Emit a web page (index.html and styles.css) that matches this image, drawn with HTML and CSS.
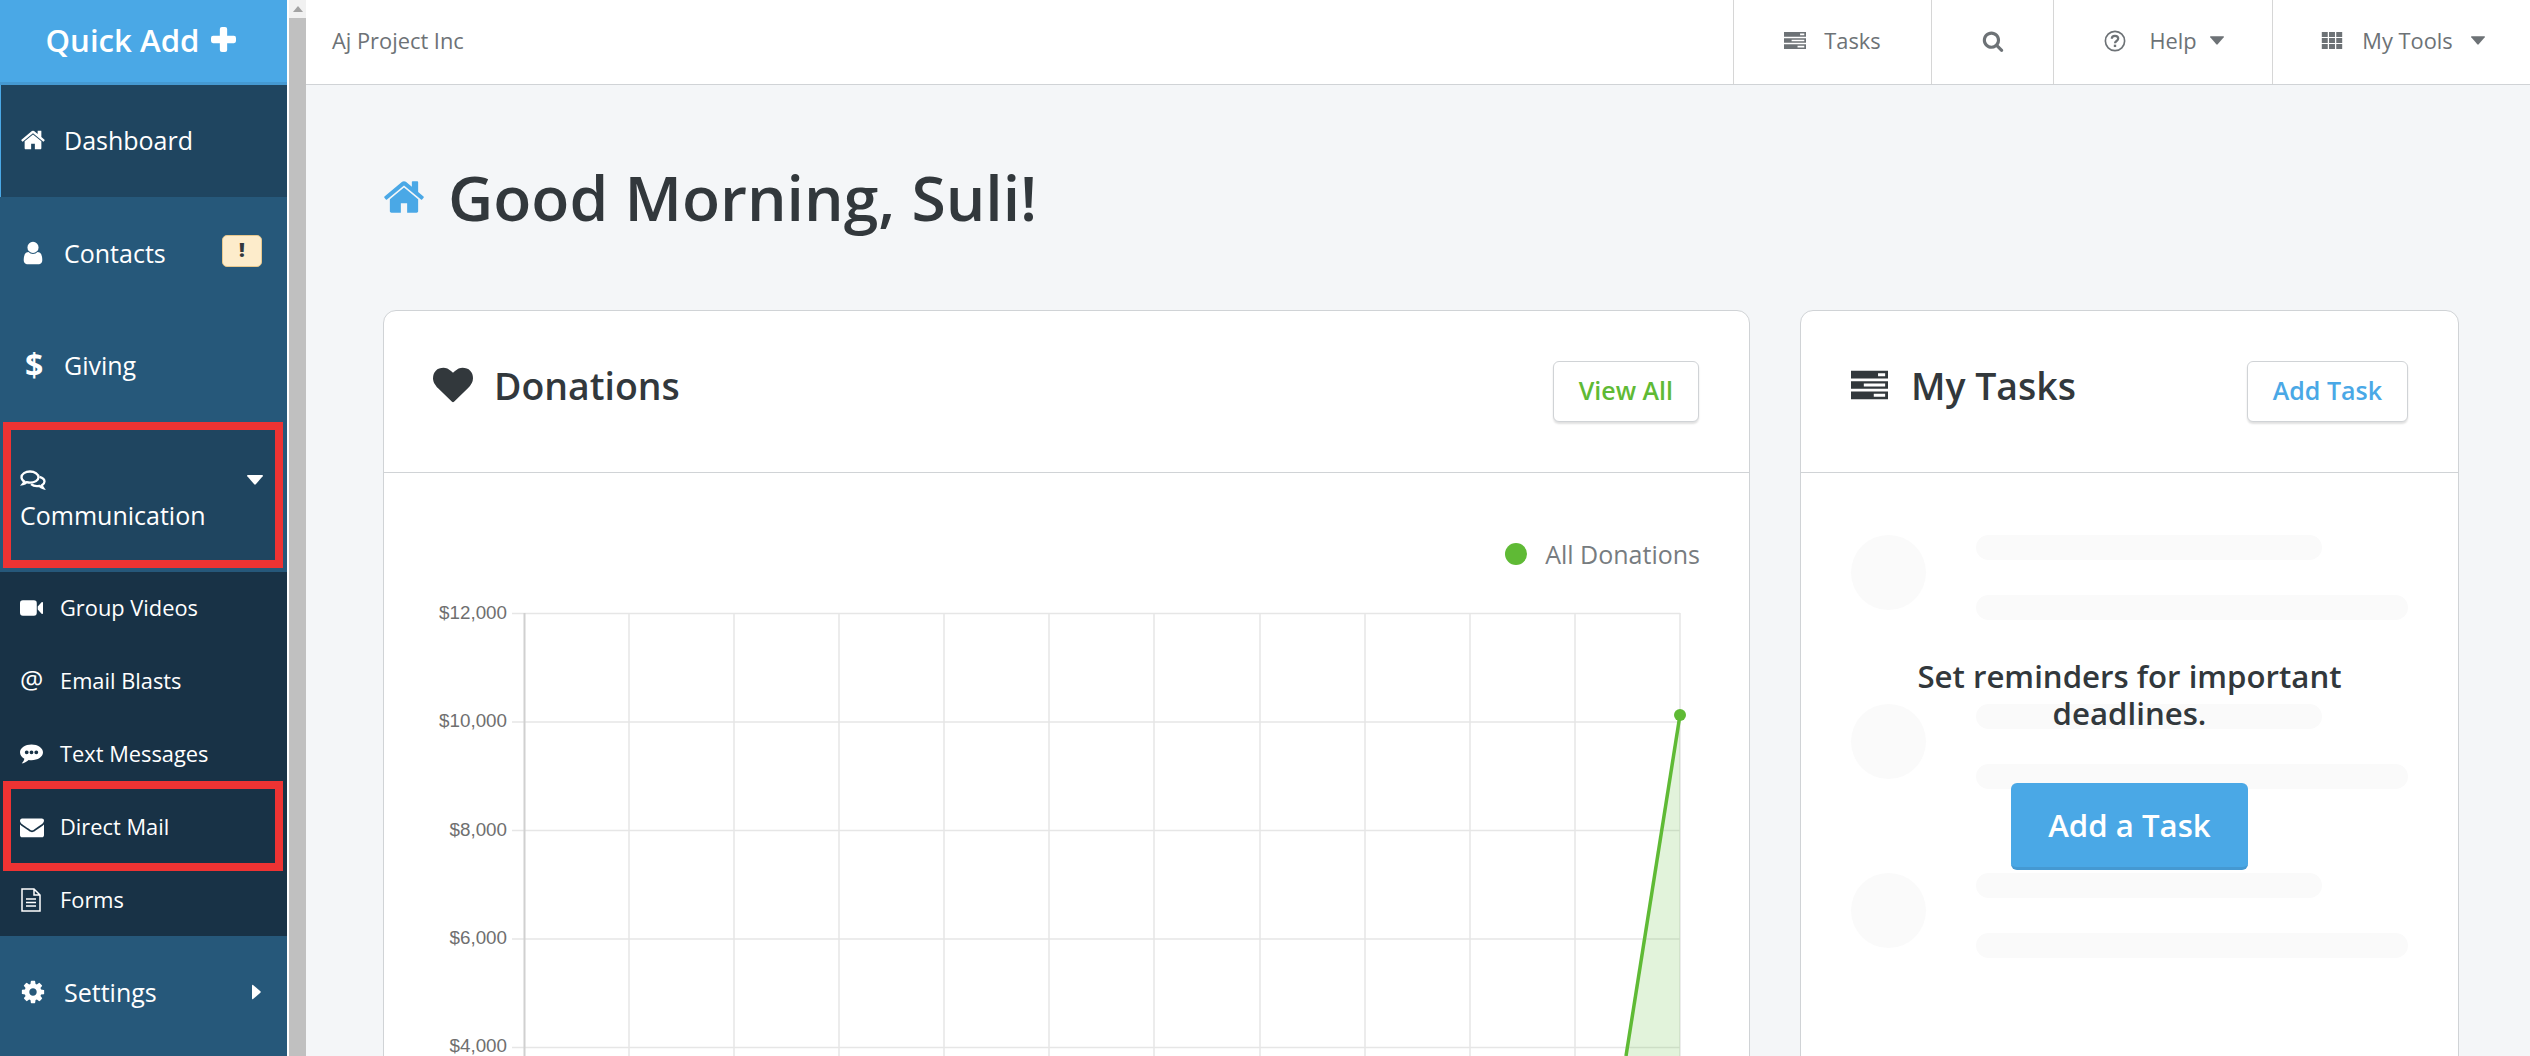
FILE: index.html
```html
<!DOCTYPE html>
<html lang="en">
<head>
<meta charset="utf-8">
<title>Dashboard</title>
<link rel="stylesheet" href="styles.css">
</head>
<body>
<svg class="defs" width="0" height="0" aria-hidden="true">
  <symbol id="i-home" viewBox="0 0 1792 1792"><path d="M1472 992v480q0 26-19 45t-45 19h-384v-384h-256v384h-384q-26 0-45-19t-19-45v-480q0-1 .5-3t.5-3l575-474 575 474q1 2 1 6zm223-69l-62 74q-8 9-21 11h-3q-13 0-21-7l-692-577-692 577q-12 8-24 7-13-2-21-11l-62-74q-8-10-7-23.5t11-21.5l719-599q32-26 76-26t76 26l244 204v-195q0-14 9-23t23-9h192q14 0 23 9t9 23v408l219 182q10 8 11 21.5t-7 23.5z"/></symbol>
  <symbol id="i-user" viewBox="0 0 1792 1792"><path d="M1536 1399q0 109-62.5 187t-150.5 78h-854q-88 0-150.5-78t-62.5-187q0-85 8.5-160.5t31.5-152 58.5-131 94-89 134.5-34.5q131 128 313 128t313-128q76 0 134.5 34.5t94 89 58.5 131 31.5 152 8.5 160.5zm-256-887q0 159-112.5 271.5t-271.5 112.5-271.5-112.5-112.5-271.5 112.5-271.5 271.5-112.5 271.5 112.5 112.5 271.5z"/></symbol>
  <symbol id="i-heart" viewBox="0 0 1792 1792"><path d="M896 1664q-26 0-44-18l-624-602q-10-8-27.5-26t-55.5-65.5-68-97.5-53.5-121-23.5-138q0-220 127-344t351-124q62 0 126.5 21.5t120 58 95.5 68.5 76 68q36-36 76-68t95.5-68.5 120-58 126.5-21.5q224 0 351 124t127 344q0 221-229 450l-623 600q-18 18-44 18z"/></symbol>
  <symbol id="i-mail" viewBox="0 0 1792 1792"><path d="M1792 710v794q0 66-47 113t-113 47h-1472q-66 0-113-47t-47-113v-794q44 49 101 87 362 246 497 345 57 42 92.5 65.5t94.5 48 110 24.5h2q51 0 110-24.5t94.5-48 92.5-65.5q170-123 498-345 57-39 100-87zm0-294q0 79-49 151t-122 123q-376 261-468 325-10 7-42.5 30.5t-54 38-52 32.5-57.5 27-50 9h-2q-23 0-50-9t-57.5-27-52-32.5-54-38-42.5-30.5q-91-64-262-182.5t-205-142.5q-62-42-117-115.5t-55-136.5q0-78 41.5-130t118.5-52h1472q65 0 112.5 47t47.5 113z"/></symbol>
  <symbol id="i-search" viewBox="0 0 1792 1792"><path d="M1216 832q0-185-131.5-316.5t-316.5-131.5-316.5 131.5-131.5 316.5 131.5 316.5 316.5 131.5 316.5-131.5 131.5-316.5zm512 832q0 52-38 90t-90 38q-54 0-90-38l-343-342q-179 124-399 124-143 0-273.5-55.5t-225-150-150-225-55.5-273.5 55.5-273.5 150-225 225-150 273.5-55.5 273.5 55.5 225 150 150 225 55.5 273.5q0 220-124 399l343 343q37 37 37 90z"/></symbol>
  <symbol id="i-cog" viewBox="0 0 1792 1792"><path d="M1152 896q0-106-75-181t-181-75-181 75-75 181 75 181 181 75 181-75 75-181zm512-109v222q0 12-8 23t-20 13l-185 28q-19 54-39 91 35 50 107 138 10 12 10 25t-9 23q-27 37-99 108t-94 71q-12 0-26-9l-138-108q-44 23-91 38-16 136-29 186-7 28-36 28h-222q-14 0-24.5-8.5t-11.5-21.5l-28-184q-49-16-90-37l-141 107q-10 9-25 9-14 0-25-11-126-114-165-168-7-10-7-23 0-12 8-23 15-21 51-66.5t54-70.5q-27-50-41-99l-183-27q-13-2-21-12.5t-8-23.5v-222q0-12 8-23t19-13l186-28q14-46 39-92-40-57-107-138-10-12-10-24 0-10 9-23 26-36 98.5-107.5t94.5-71.5q13 0 26 10l138 107q44-23 91-38 16-136 29-186 7-28 36-28h222q14 0 24.5 8.5t11.5 21.5l28 184q49 16 90 37l142-107q9-9 24-9 13 0 25 10 129 119 165 170 7 8 7 22 0 12-8 23-15 21-51 66.5t-54 70.5q26 50 41 98l183 28q13 2 21 12.5t8 23.5z"/></symbol>
  <symbol id="i-plus" viewBox="0 0 24 24"><path d="M8.500 2a2 2 0 0 1 2-2h3a2 2 0 0 1 2 2V8.500H22a2 2 0 0 1 2 2v3a2 2 0 0 1-2 2h-6.500V22a2 2 0 0 1-2 2h-3a2 2 0 0 1-2-2v-6.500H2a2 2 0 0 1-2-2v-3a2 2 0 0 1 2-2h6.500z"/></symbol>
  <symbol id="i-video" viewBox="0 0 24 16"><path d="M3 0h11.500a3 3 0 0 1 3 3v10a3 3 0 0 1-3 3H3a3 3 0 0 1-3-3V3a3 3 0 0 1 3-3zM18.500 6.500l4-4.500q1.500-1 1.500.8v10.400q0 1.800-1.500.8l-4-4.500z"/></symbol>
  <symbol id="i-dots" viewBox="0 0 24 20"><path fill-rule="evenodd" d="M12 0c6.600 0 12 3.600 12 8.300s-5.400 8.300-12 8.300c-1 0-2-.1-3-.3C7.500 17.800 5 19.500 1.800 19.800c1.400-1.300 2.500-2.900 2.700-4.800C1.800 13.600 0 11 0 8.300 0 3.600 5.400 0 12 0zM7 6.300a2 2 0 1 0 0 4 2 2 0 0 0 0-4zm5 0a2 2 0 1 0 0 4 2 2 0 0 0 0-4zm5 0a2 2 0 1 0 0 4 2 2 0 0 0 0-4z"/></symbol>
  <symbol id="i-comments" viewBox="0 0 26 20"><g fill="none" stroke="currentColor" stroke-width="2.300"><path d="M10 1.500c-4.700 0-8.500 2.500-8.500 5.700 0 1.700 1.100 3.200 2.800 4.300-.2 1-.7 1.800-1.400 2.600 1.500-.3 2.800-1 3.800-1.900 1.100.3 2.200.5 3.300.5 4.700 0 8.500-2.400 8.500-5.500S14.700 1.500 10 1.500z"/><path d="M19.500 6.800c2.900.8 5 2.600 5 4.700 0 1.500-1 2.800-2.600 3.800.1.900.7 2 1.300 2.900-1.500-.4-2.900-1.300-3.900-2.300-3 .6-6.300-.1-8.200-1.800"/></g></symbol>
  <symbol id="i-doc" viewBox="0 0 20 24"><path fill="none" stroke="currentColor" stroke-width="1.500" d="M1 1h12l6 6v16H1zM13 1v6h6M5 11h10M5 14.500h10M5 18h10"/></symbol>
  <symbol id="i-tasks" viewBox="0 0 26 20"><path fill-rule="evenodd" d="M0 0h26v5.500H0zM19 1.700v2.100h5V1.700zM0 7.300h26v5.400H0zM9 9v2h15V9zM0 14.500h26V20H0zM16 16.200v2.100h8v-2.100z"/></symbol>
  <symbol id="i-help" viewBox="0 0 24 24"><circle cx="12" cy="12" r="10.500" fill="none" stroke="currentColor" stroke-width="1.800"/><path fill="none" stroke="currentColor" stroke-width="2.400" d="M8.500 9.500c0-2 1.500-3.200 3.500-3.200s3.500 1.200 3.500 3c0 2.800-3.500 2.600-3.500 5.200"/><rect x="10.700" y="16" width="2.600" height="2.600"/></symbol>
  <symbol id="i-grid" viewBox="0 0 24 20"><path d="M0 0h7v5.800H0zM8.500 0h7v5.800h-7zM17 0h7v5.800h-7zM0 7.100h7v5.800H0zM8.500 7.100h7v5.800h-7zM17 7.100h7v5.800h-7zM0 14.200h7V20H0zM8.500 14.200h7V20h-7zM17 14.200h7V20h-7z"/></symbol>
  <symbol id="i-down" viewBox="0 0 16 10"><path d="M1 0h14q1.500 0 .7 1.200L8.800 9.300q-.8.900-1.600 0L.3 1.200Q-.5 0 1 0z"/></symbol>
  <symbol id="i-right" viewBox="0 0 10 16"><path d="M0 1v14q0 1.500 1.200.7l8.100-6.900q.9-.8 0-1.600L1.200.3Q0-.5 0 1z"/></symbol>
</svg>

<div class="app">
  <aside class="sidebar">
    <a class="quick-add"><span>Quick Add</span><svg class="qa-plus"><use href="#i-plus"/></svg></a>
    <nav class="nav">
      <a class="nav-item is-current"><span class="nav-ico"><svg class="ic-home"><use href="#i-home"/></svg></span><span>Dashboard</span></a>
      <a class="nav-item"><span class="nav-ico"><svg class="ic-user"><use href="#i-user"/></svg></span><span>Contacts</span><span class="badge">!</span></a>
      <a class="nav-item nav-giving"><span class="nav-ico nav-dollar">$</span><span>Giving</span></a>
      <div class="nav-open">
        <div class="nav-open-head">
          <svg class="ic-comments"><use href="#i-comments"/></svg>
          <svg class="ic-caret"><use href="#i-down"/></svg>
        </div>
        <div class="nav-open-label">Communication</div>
      </div>
      <div class="subnav">
        <a class="sub-item"><span class="sub-ico"><svg class="ic-video"><use href="#i-video"/></svg></span>Group Videos</a>
        <a class="sub-item"><span class="sub-ico sub-at">@</span>Email Blasts</a>
        <a class="sub-item"><span class="sub-ico"><svg class="ic-dots"><use href="#i-dots"/></svg></span>Text Messages</a>
        <a class="sub-item sub-marked"><span class="sub-ico"><svg class="ic-mail"><use href="#i-mail"/></svg></span>Direct Mail</a>
        <a class="sub-item"><span class="sub-ico"><svg class="ic-doc"><use href="#i-doc"/></svg></span>Forms</a>
      </div>
      <a class="nav-item nav-settings"><span class="nav-ico"><svg class="ic-cog"><use href="#i-cog"/></svg></span><span>Settings</span><svg class="ic-right"><use href="#i-right"/></svg></a>
    </nav>
  </aside>

  <div class="scrollbar"><div class="scroll-up"><i></i></div><div class="scroll-thumb"></div></div>

  <div class="content">
    <header class="topbar">
      <div class="org">Aj Project Inc</div>
      <a class="top-item ti-tasks"><svg class="t-tasks"><use href="#i-tasks"/></svg>Tasks</a>
      <a class="top-item ti-search"><svg class="t-search"><use href="#i-search"/></svg></a>
      <a class="top-item ti-help"><svg class="t-help"><use href="#i-help"/></svg>Help<svg class="t-caret"><use href="#i-down"/></svg></a>
      <a class="top-item ti-tools"><svg class="t-grid"><use href="#i-grid"/></svg>My Tools<svg class="t-caret"><use href="#i-down"/></svg></a>
    </header>

    <main class="main">
      <h1 class="greeting"><svg class="g-home"><use href="#i-home"/></svg>Good Morning, Suli!</h1>
      <div class="cards">
        <section class="card card-donations">
          <div class="card-head">
            <h2 class="card-title"><svg class="h-heart"><use href="#i-heart"/></svg>Donations</h2>
            <a class="btn-outline btn-green">View All</a>
          </div>
          <div class="legend"><i class="legend-dot"></i>All Donations</div>
          <div class="chart">
            <svg class="chart-svg" viewBox="0 0 1366 526" width="1366" height="526">
              <g class="grid-y">
                <line x1="128" x2="1296" y1="0.500" y2="0.500"/>
                <line x1="128" x2="1296" y1="109" y2="109"/>
                <line x1="128" x2="1296" y1="217.500" y2="217.500"/>
                <line x1="128" x2="1296" y1="326" y2="326"/>
                <line x1="128" x2="1296" y1="434.500" y2="434.500"/>
              </g>
              <g class="grid-x">
                <line x1="245" x2="245" y1="0" y2="526"/>
                <line x1="350" x2="350" y1="0" y2="526"/>
                <line x1="455" x2="455" y1="0" y2="526"/>
                <line x1="560" x2="560" y1="0" y2="526"/>
                <line x1="665" x2="665" y1="0" y2="526"/>
                <line x1="770" x2="770" y1="0" y2="526"/>
                <line x1="876" x2="876" y1="0" y2="526"/>
                <line x1="981" x2="981" y1="0" y2="526"/>
                <line x1="1086" x2="1086" y1="0" y2="526"/>
                <line x1="1191" x2="1191" y1="0" y2="526"/>
                <line x1="1296" x2="1296" y1="0" y2="526"/>
              </g>
              <line class="axis-y" x1="140.500" x2="140.500" y1="0" y2="526"/>
              <path class="area" d="M1242 443L1296 102V443z"/>
              <path class="series" d="M1242 443L1296 102"/>
              <circle class="point" cx="1296" cy="102" r="6"/>
              <g class="ticks">
                <text x="123" y="6">$12,000</text>
                <text x="123" y="114">$10,000</text>
                <text x="123" y="223">$8,000</text>
                <text x="123" y="331">$6,000</text>
                <text x="123" y="439">$4,000</text>
              </g>
            </svg>
          </div>
        </section>

        <section class="card card-tasks">
          <div class="card-head">
            <h2 class="card-title"><svg class="h-tasks"><use href="#i-tasks"/></svg>My Tasks</h2>
            <a class="btn-outline btn-blue">Add Task</a>
          </div>
          <div class="tasks-body">
            <div class="skeleton">
              <div class="sk-row"><i class="sk-dot"></i><div class="sk-lines"><i class="sk-bar sk-short"></i><i class="sk-bar"></i></div></div>
              <div class="sk-row"><i class="sk-dot"></i><div class="sk-lines"><i class="sk-bar sk-short"></i><i class="sk-bar"></i></div></div>
              <div class="sk-row"><i class="sk-dot"></i><div class="sk-lines"><i class="sk-bar sk-short"></i><i class="sk-bar"></i></div></div>
            </div>
            <div class="tasks-cta">
              <p class="cta-text">Set reminders for important deadlines.</p>
              <a class="btn-primary">Add a Task</a>
            </div>
          </div>
        </section>
      </div>
    </main>
  </div>
</div>
</body>
</html>
```

FILE: styles.css
```css
* { box-sizing: border-box; }
html, body { margin: 0; height: 100%; overflow: hidden; }
body { font-family: "Open Sans", "Noto Sans", sans-serif; background: #f4f6f8; color: #32383c; }
svg { fill: currentColor; display: block; flex: none; }
.defs { position: absolute; }
.app { display: flex; height: 1056px; overflow: hidden; }

/* Sidebar */
.sidebar { width: 287px; flex: none; background: #26587a; color: #fff; }
.quick-add { height: 85px; display: flex; align-items: center; justify-content: center; gap: 12px; background: #4aa8e6; border-bottom: 3px solid #4599d2; font-size: 31.200px; font-weight: 600; padding: 0 5px 3px 0; }
.qa-plus { width: 25px; height: 25px; }
.nav { display: flex; flex-direction: column; }
.nav-item { height: 112px; display: flex; align-items: center; padding-left: 20px; padding-bottom: 1px; font-size: 25px; position: relative; }
.nav-item.is-current { background: #1f4560; border-left: 1px solid #4aa8e6; padding-left: 19px; padding-bottom: 2px; }
.nav-giving { height: 113px; }
.nav-ico { width: 44px; display: flex; justify-content: flex-start; flex: none; }
.ic-home { width: 26px; height: 26px; }
.ic-user { width: 26px; height: 26px; }
.nav-dollar { font-weight: 700; font-size: 32px; line-height: 32px; padding-left: 5px; }
.badge { position: absolute; left: 222px; top: 38px; width: 40px; height: 32px; background: #fdeccb; border: 1px solid #e7c88e; border-radius: 5px; color: #32383c; font-size: 20px; font-weight: 800; line-height: 28px; text-align: center; }
.nav-open { height: 146px; margin: 0 4px 4px 3px; padding: 36px 0 0 9px; background: #1f4560; border: 8px solid #ee3333; }
.nav-open-head { display: flex; justify-content: space-between; align-items: center; padding-right: 12px; height: 28px; }
.ic-comments { width: 26px; height: 20px; }
.ic-caret { width: 16px; height: 10px; }
.nav-open-label { font-size: 25px; line-height: 36px; margin-top: 3px; }
.subnav { background: #183246; height: 364px; display: flex; flex-direction: column; }
.sub-item { height: 73px; flex: none; display: flex; align-items: center; padding-left: 20px; padding-bottom: 2px; font-size: 21.840px; position: relative; }
.sub-ico { width: 40px; flex: none; display: flex; }
.sub-at { font-size: 26px; line-height: 26px; padding-bottom: 4px; }
.ic-video { width: 23px; height: 16px; }
.ic-dots { width: 23px; height: 20px; }
.ic-mail { width: 24px; height: 24px; }
.ic-doc { width: 20px; height: 24px; margin-left: 1px; }
.sub-marked::after { content: ""; position: absolute; left: 3px; right: 4px; top: -10px; bottom: -7px; border: 8px solid #ee3333; }
.nav-settings { height: 120px; padding-bottom: 9px; }
.ic-cog { width: 26px; height: 26px; }
.ic-right { position: absolute; left: 252px; top: 48px; width: 9px; height: 16px; }

/* Fake scrollbar */
.scrollbar { width: 19px; flex: none; background: #fff; padding-left: 2px; display: flex; flex-direction: column; }
.scroll-up { height: 18px; background: #f1f1f1; position: relative; }
.scroll-up i { position: absolute; left: 4px; top: 6px; border: 5px solid transparent; border-top: 0; border-bottom: 6px solid #a3a3a3; }
.scroll-thumb { flex: 1; background: #c0c0c0; }

/* Content */
.content { flex: 1; min-width: 0; display: flex; flex-direction: column; }
.topbar { height: 85px; flex: none; background: #fff; border-bottom: 1px solid #d0d3d6; display: flex; align-items: stretch; color: #6d7276; font-size: 21.840px; }
.org { flex: 1; display: flex; align-items: center; padding: 0 0 3px 26px; }
.top-item { display: flex; align-items: center; border-left: 1px solid #d6d6d6; justify-content: center; padding-bottom: 3px; }
.ti-tasks { width: 198px; gap: 18px; }
.ti-search { width: 122px; }
.ti-help { width: 219px; padding-left: 2px; }
.ti-tools { width: 258px; padding-left: 3px; }
.t-tasks { width: 22px; height: 17px; }
.t-search { width: 22px; height: 22px; }
.t-help { width: 22px; height: 22px; margin-right: 23px; }
.t-grid { width: 22px; height: 17px; margin-right: 19px; }
.t-caret { width: 14px; height: 9px; margin-left: 13px; }
.ti-tools .t-caret { margin-left: 18px; }

.main { padding: 0 71px 0 77px; flex: 1; min-height: 0; }
.greeting { margin: 0; height: 225px; display: flex; align-items: center; font-size: 62.400px; font-weight: 600; line-height: 88px; padding-bottom: 1px; color: #32383c; }
.g-home { width: 44px; height: 44px; color: #4aa8e6; margin: 0 22px 0 -1px; }
.cards { display: flex; gap: 50px; align-items: flex-start; }
.card { background: #fff; border: 1px solid #d0d3d6; border-radius: 13px 13px 0 0; height: 800px; overflow: hidden; }
.card-donations { width: 1367px; flex: none; }
.card-tasks { flex: 1; }
.card-head { height: 162px; border-bottom: 1px solid #d0d3d6; display: flex; justify-content: space-between; padding: 50px 50px 0 50px; }
.card-title { margin: 0; display: flex; align-items: center; height: 48px; font-size: 37.440px; font-weight: 600; color: #32383c; }
.h-heart { width: 40px; height: 40px; margin: 0 21px 0 -1px; }
.h-tasks { width: 37px; height: 30px; margin-right: 23px; }
.btn-outline { height: 61px; display: flex; align-items: center; padding: 0 25px 3px; border: 1px solid #d0d3d6; border-radius: 6px; box-shadow: 0 2px 2px rgba(0,0,0,.12); font-size: 25px; font-weight: 600; background: #fff; }
.btn-green { color: #5fba35; }
.btn-blue { color: #4aa8e6; }
.legend { display: flex; justify-content: flex-end; align-items: center; height: 40px; margin-top: 61px; padding-right: 49px; font-size: 25px; color: #777c80; }
.legend-dot { width: 22px; height: 22px; border-radius: 50%; background: #5fba35; margin-right: 18px; }
.chart { margin-top: 39px; }
.chart-svg { display: block; overflow: visible; }
.grid-y line, .grid-x line { stroke: #e6e6e6; stroke-width: 1.500; }
.axis-y { stroke: #d0d0d0; stroke-width: 2; }
.area { fill: rgba(95,186,53,.18); }
.series { fill: none; stroke: #5fba35; stroke-width: 3.500; }
.point { fill: #5fba35; }
.ticks text { font-family: "Liberation Sans", Arial, sans-serif; font-size: 18.800px; fill: #6f6f6f; text-anchor: end; }

/* Tasks */
.tasks-body { position: relative; padding: 62px 50px 0 50px; }
.skeleton { display: flex; flex-direction: column; gap: 84px; }
.sk-row { display: flex; gap: 50px; height: 85px; }
.sk-dot { width: 75px; height: 75px; border-radius: 50%; background: #fafafa; flex: none; }
.sk-lines { flex: 1; display: flex; flex-direction: column; gap: 35px; }
.sk-bar { display: block; height: 25px; border-radius: 13px; background: #fafafa; }
.sk-short { width: 346px; }
.tasks-cta { position: absolute; left: 0; right: 0; top: 185px; display: flex; flex-direction: column; align-items: center; }
.cta-text { margin: 0; width: 480px; text-align: center; font-size: 31.200px; line-height: 37px; font-weight: 600; color: #32383c; }
.btn-primary { margin-top: 51px; width: 237px; height: 87px; display: flex; align-items: center; justify-content: center; background: #4aa8e6; border-bottom: 3px solid #4599d2; border-radius: 6px; color: #fff; font-size: 31.200px; font-weight: 600; }
```
